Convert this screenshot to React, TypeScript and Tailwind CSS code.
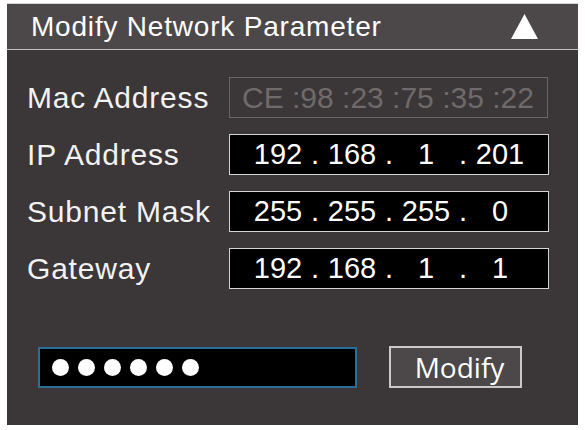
const arial = { fontFamily: '"Liberation Sans", Arial, sans-serif' };

type Row = { label: string; octets: string[] };

const rows: Row[] = [
  { label: "IP Address", octets: ["192", "168", "1", "201"] },
  { label: "Subnet Mask", octets: ["255", "255", "255", "0"] },
  { label: "Gateway", octets: ["192", "168", "1", "1"] },
];

const IpBox = ({ octets }: { octets: string[] }) => {
  return (
    <div className="flex h-[41px] w-[320px] items-center border border-[#d4d4d4] bg-black pl-[18px] text-[29px] leading-none text-white">
      {octets.map((o, i) => (
        <div key={i} className="flex">
          {i > 0 && <span className="w-[14px] text-center">.</span>}
          <span className="w-[60px] text-center">{o}</span>
        </div>
      ))}
    </div>
  );
};

const App = () => {
  return (
    <div className="h-[430px] w-[585px] bg-white px-[7px] pt-[3px]" style={arial}>
      <div className="flex h-[422px] flex-col border-t border-[#d6d6d6] bg-[#3b3637]">
        <div className="flex h-[46px] items-center justify-between border-b border-[#c4c4c4] bg-[#4c4849] pl-[24px] pr-[40px]">
          <span className="text-[28px] tracking-[0.8px] text-white">Modify Network Parameter</span>
          <svg width="27" height="25" viewBox="0 0 27 25">
            <polygon points="13.5,0 27,25 0,25" fill="#ffffff" />
          </svg>
        </div>

        <div className="flex flex-col gap-[16px] pl-[20px] pt-[27px]">
          <div className="flex h-[41px] items-center">
            <span className="w-[202px] text-[30px] tracking-[0.8px] text-[#f2f2f2]">Mac Address</span>
            <div className="flex h-[41px] w-[319px] items-center whitespace-pre border border-[#6a6566] pl-[12px] text-[30px] leading-none text-[#6f6a6b]">
              CE :98 :23 :75 :35 :22
            </div>
          </div>
          {rows.map((r) => (
            <div key={r.label} className="flex h-[41px] items-center">
              <span className="w-[202px] text-[30px] tracking-[0.8px] text-[#f2f2f2]">{r.label}</span>
              <IpBox octets={r.octets} />
            </div>
          ))}
        </div>

        <div className="mt-[57px] flex items-center pl-[31px]">
          <div className="flex h-[41px] w-[319px] items-center gap-[9px] border-2 border-[#2b6e98] bg-black pl-[12px]">
            {[0, 1, 2, 3, 4, 5].map((d) => (
              <span key={d} className="h-[17px] w-[17px] rounded-full bg-white" />
            ))}
          </div>
          <button
            className="ml-[32px] flex h-[42px] w-[133px] items-center justify-center border-2 border-[#c9c9c9] bg-[#4c4849] pl-[8px] text-[28px] text-white"
            style={{ fontFamily: '"Open Sans", "Noto Sans", sans-serif' }}
          >
            Modify
          </button>
        </div>
      </div>
    </div>
  );
};

export default App;
